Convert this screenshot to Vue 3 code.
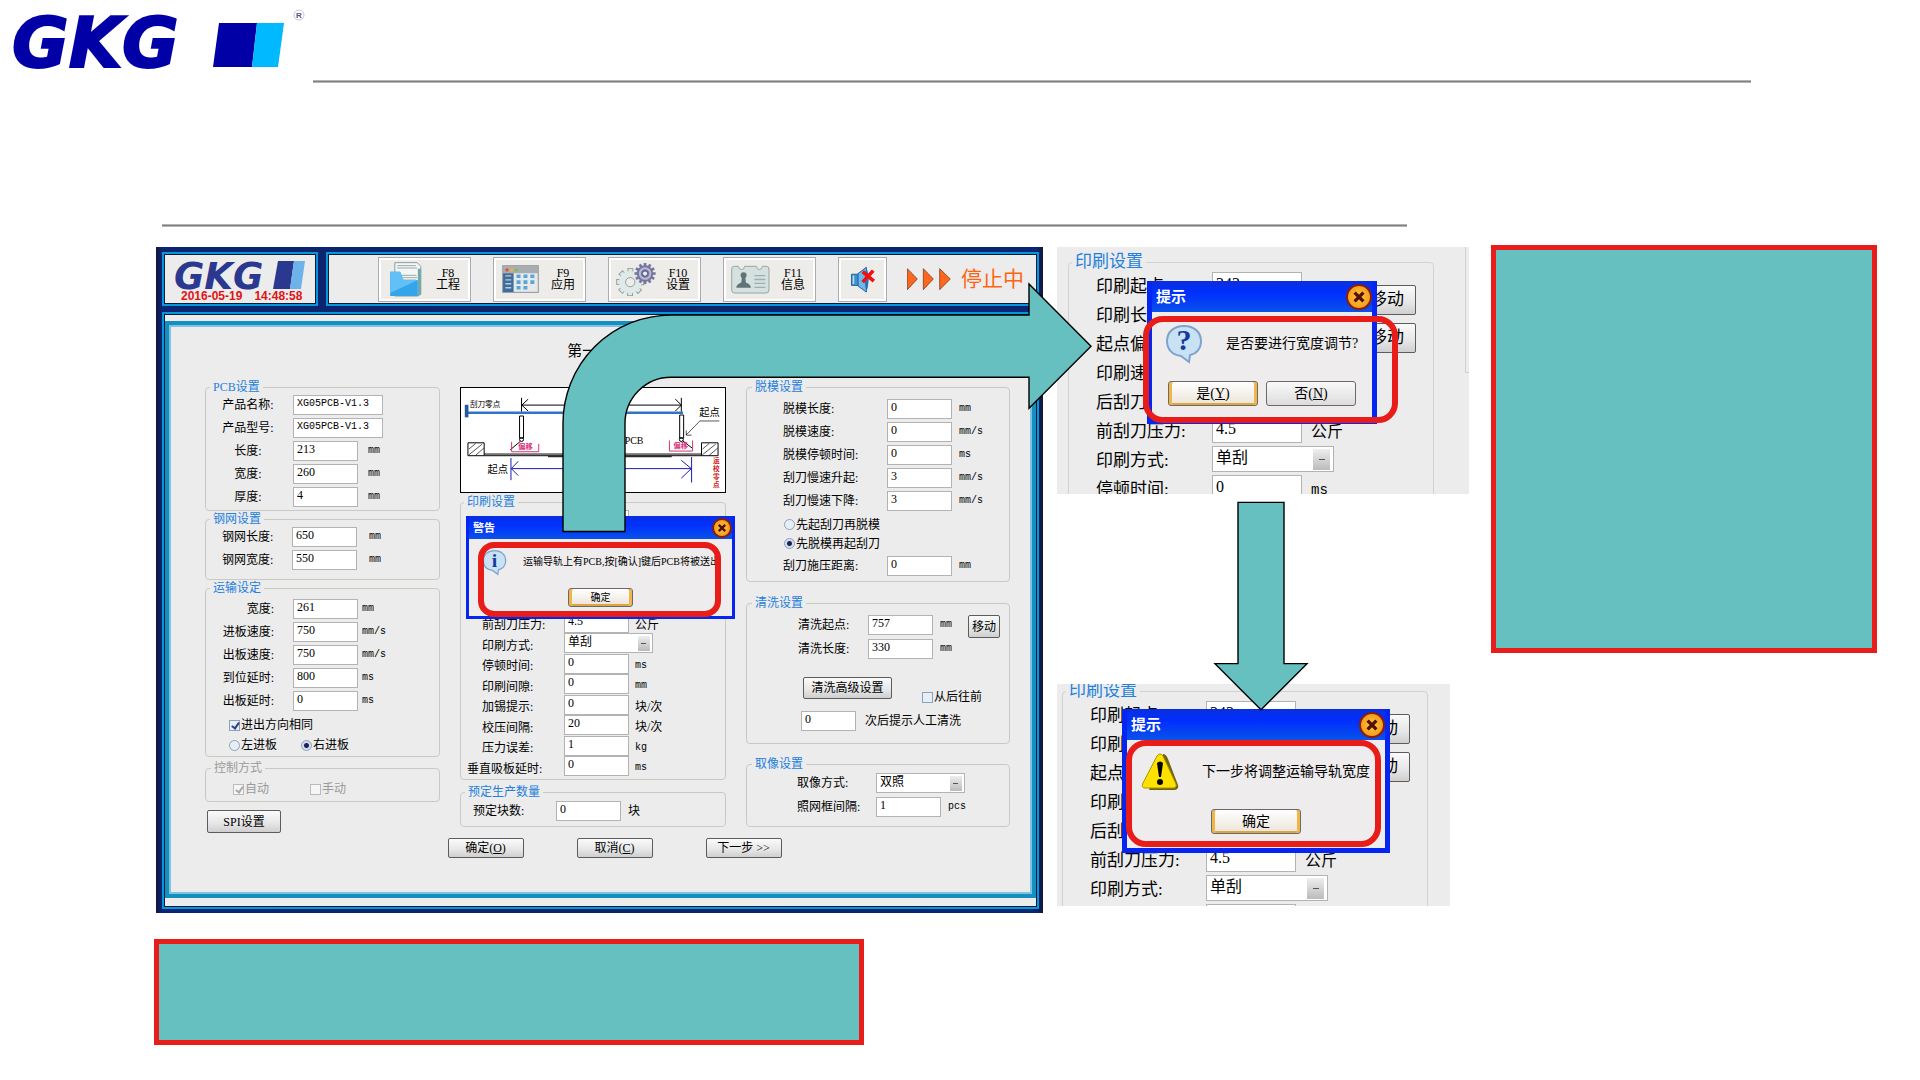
<script setup>
const pcb = [
  { id: 'pcb-name', label: '产品名称:', value: 'XG05PCB-V1.3', wide: true },
  { id: 'pcb-model', label: '产品型号:', value: 'XG05PCB-V1.3', wide: true },
  { id: 'pcb-length', label: '长度:', value: '213', unit: 'mm' },
  { id: 'pcb-width', label: '宽度:', value: '260', unit: 'mm' },
  { id: 'pcb-thick', label: '厚度:', value: '4', unit: 'mm' }
]
const stencil = [
  { id: 'st-length', label: '钢网长度:', value: '650', unit: 'mm' },
  { id: 'st-width', label: '钢网宽度:', value: '550', unit: 'mm' }
]
const transport = [
  { id: 'tr-width', label: '宽度:', value: '261', unit: 'mm' },
  { id: 'tr-in', label: '进板速度:', value: '750', unit: 'mm/s' },
  { id: 'tr-out', label: '出板速度:', value: '750', unit: 'mm/s' },
  { id: 'tr-arrive', label: '到位延时:', value: '800', unit: 'ms' },
  { id: 'tr-delay', label: '出板延时:', value: '0', unit: 'ms' }
]
const printing = [
  { id: 'start', label: '印刷起点:', value: '343', unit: 'mm' },
  { id: 'length', label: '印刷长度:', value: '260', unit: 'mm' },
  { id: 'offset', label: '起点偏移:', value: '0', unit: 'mm' },
  { id: 'speed', label: '印刷速度:', value: '50', unit: 'mm/s' },
  { id: 'rear', label: '后刮刀压力:', value: '4.5', unit: '公斤', cjk: true },
  { id: 'front', label: '前刮刀压力:', value: '4.5', unit: '公斤', cjk: true },
  { id: 'mode', label: '印刷方式:', value: '单刮', select: true },
  { id: 'pause', label: '停顿时间:', value: '0', unit: 'ms' },
  { id: 'gap', label: '印刷间隙:', value: '0', unit: 'mm' },
  { id: 'solder', label: '加锡提示:', value: '0', unit: '块/次', cjk: true },
  { id: 'check', label: '校压间隔:', value: '20', unit: '块/次', cjk: true },
  { id: 'error', label: '压力误差:', value: '1', unit: 'kg' },
  { id: 'suction', label: '垂直吸板延时:', value: '0', unit: 'ms', long: true }
]
const release = [
  { id: 're-length', label: '脱模长度:', value: '0', unit: 'mm' },
  { id: 're-speed', label: '脱模速度:', value: '0', unit: 'mm/s' },
  { id: 're-pause', label: '脱模停顿时间:', value: '0', unit: 'ms' },
  { id: 're-up', label: '刮刀慢速升起:', value: '3', unit: 'mm/s' },
  { id: 're-down', label: '刮刀慢速下降:', value: '3', unit: 'mm/s' }
]
const clean = [
  { id: 'cl-start', label: '清洗起点:', value: '757', unit: 'mm' },
  { id: 'cl-length', label: '清洗长度:', value: '330', unit: 'mm' }
]
const details = ['ask', 'notice']
const detailRows = printing.slice(0, 8)
const teeth = Array.from({ length: 12 }, (_, i) => i * 30)
const bigTeeth = Array.from({ length: 8 }, (_, i) => i * 45)
</script>

<template>
  <div class="slide">
    <header class="masthead">
      <svg class="brand" viewBox="0 0 313 92" role="img" aria-label="GKG">
        <text x="12" y="67" class="brand-text">GKG</text>
        <path d="M219 23H257L252 67H213Z" fill="#0000a6" />
        <path d="M257 23H284L278 67H252Z" fill="#00b9ff" />
        <circle cx="299" cy="15" r="5" fill="none" stroke="#c4c4dc" />
        <text x="296" y="18" class="reg">R</text>
      </svg>
      <hr class="rule" />
    </header>
    <hr class="rule second" />

    <main class="stage">
      <section class="app">
        <div class="topbar">
          <div class="box logo-box">
            <svg class="app-logo" viewBox="174 259 134 31" role="img" aria-label="GKG">
              <text x="174" y="289" class="app-logo-text">GKG</text>
              <path d="M278 261H294L290 289H273Z" fill="#2b3890" />
              <path d="M294 261H305L301 289H290Z" fill="#6db3ea" />
            </svg>
            <div class="clock"><span>2016-05-19</span><span>14:48:58</span></div>
          </div>
          <nav class="box tools">
            <button class="tool">
              <span class="ico"><svg width="33" height="35" viewBox="720 65 98 105">
                <path d="M737 67H804L815 78V162L806 167H737Z" fill="#f5f7f7" stroke="#8a9ba0" stroke-width="3" />
                <path d="M744 76H800M744 83H804M744 105H802M760 112H804M760 119H800" stroke="#97a9a9" stroke-width="3" />
                <path d="M806 85H815V161L806 167Z" fill="#6ea9a9" />
                <path d="M723 94H753L763 119H806V167H723Z" fill="#35a5ea" />
                <path d="M723 94H753L763 119H806L723 158Z" fill="#62c0f7" />
              </svg></span>
              <span class="cap">F8<br />工程</span>
            </button>
            <button class="tool">
              <span class="ico"><svg width="37" height="28" viewBox="1060 77 112 85">
                <rect x="1062" y="79" width="108" height="81" fill="#e6e9e8" stroke="#8b9498" stroke-width="3" />
                <rect x="1062" y="79" width="108" height="23" fill="#a9adb0" />
                <circle cx="1075" cy="92" r="5" fill="#e94a3c" /><circle cx="1089" cy="92" r="5" fill="#edb23c" /><circle cx="1103" cy="92" r="5" fill="#79c050" />
                <rect x="1063" y="102" width="32" height="57" fill="#3f6c9a" />
                <path d="M1070 110H1088M1070 122H1088M1070 134H1088M1070 146H1088" stroke="#b9cce0" stroke-width="4" />
                <path d="M1104 111H1116M1125 111H1137M1146 111H1158M1104 129H1116M1125 129H1137M1146 129H1158M1104 146H1116M1125 146H1137" stroke="#58a5dc" stroke-width="11" />
              </svg></span>
              <span class="cap">F9<br />应用</span>
            </button>
            <button class="tool">
              <span class="ico"><svg width="41" height="34" viewBox="78 65 122 103">
                <g fill="#dfe9e8" stroke="#8fa3a3" stroke-width="3">
                  <rect v-for="a in bigTeeth" :key="a" x="116" y="85" width="15" height="18" :transform="`rotate(${a} 123 126)`" />
                  <circle cx="123" cy="126" r="31" />
                  <circle cx="123" cy="126" r="14" fill="#efecea" />
                </g>
                <circle cx="123" cy="126" r="27" fill="none" stroke="#dfe9e8" stroke-width="14" />
                <g fill="#77779e">
                  <rect v-for="a in teeth" :key="a" x="164" y="68" width="8" height="12" :transform="`rotate(${a} 168 100)`" />
                  <circle cx="168" cy="100" r="25" />
                </g>
                <circle cx="168" cy="100" r="16" fill="none" stroke="#b9b9da" stroke-width="6" />
                <circle cx="168" cy="100" r="8" fill="#ecebf2" stroke="#50507c" stroke-width="3" />
              </svg></span>
              <span class="cap">F10<br />设置</span>
            </button>
            <button class="tool">
              <span class="ico"><svg width="39" height="29" viewBox="428 72 118 88">
                <path d="M438 76H450Q452 86 460 86Q468 86 469 76H505Q507 86 514 86Q521 86 523 76H535Q543 76 543 84V148Q543 157 534 157H439Q430 157 430 148V84Q430 76 438 76Z" fill="#d5e1df" stroke="#93a6a4" stroke-width="3" />
                <circle cx="466" cy="103" r="9" fill="#5f7476" />
                <path d="M461 108H471L473 125Q488 130 488 141H444Q444 130 459 125Z" fill="#5f7476" />
                <path d="M499 104H532M499 116H532M499 128H532M499 140H532" stroke="#9dafae" stroke-width="4" />
              </svg></span>
              <span class="cap">F11<br />信息</span>
            </button>
            <button class="tool mute" aria-label="静音">
              <svg width="26" height="27" viewBox="780 78 78 82">
                <path d="M784 103H807V137H784Z" fill="#3c8fd0" stroke="#2a628f" stroke-width="3" />
                <path d="M804 101L829 82Q837 120 829 157L804 139Z" fill="#6ab8ec" stroke="#235f9c" stroke-width="3" />
                <path d="M829 82Q843 120 829 157Q820 120 829 82Z" fill="#2b6fb4" />
                <path d="M790 107V133" stroke="#b5dcf5" stroke-width="5" />
                <path d="M818 95L852 124M850 92L818 127" stroke="#f01010" stroke-width="11" />
              </svg>
            </button>
            <svg class="chevrons" width="44" height="22" viewBox="950 84 132 66">
              <path d="M951 86L981 117L951 149Z M999 86L1029 117L999 149Z M1048 86L1080 117L1048 149Z" fill="#ff681c" stroke="#5c2a10" stroke-width="2" />
            </svg>
            <strong class="status">停止中</strong>
          </nav>
        </div>

        <div class="box work">
          <form class="frame" @submit.prevent>
            <h1 class="step">第一步</h1>
            <div class="columns">
              <div class="col">
                <fieldset class="g-pcb">
                  <legend>PCB设置</legend>
                  <div v-for="f in pcb" :key="f.id" class="field">
                    <label :for="f.id">{{ f.label }}</label>
                    <input :id="f.id" type="text" :value="f.value" :class="{ wide: f.wide }" />
                    <span class="unit">{{ f.unit }}</span>
                  </div>
                </fieldset>
                <fieldset class="g-stencil">
                  <legend>钢网设置</legend>
                  <div v-for="f in stencil" :key="f.id" class="field">
                    <label :for="f.id">{{ f.label }}</label>
                    <input :id="f.id" type="text" :value="f.value" />
                    <span class="unit">{{ f.unit }}</span>
                  </div>
                </fieldset>
                <fieldset class="g-transport">
                  <legend>运输设定</legend>
                  <div v-for="f in transport" :key="f.id" class="field">
                    <label :for="f.id">{{ f.label }}</label>
                    <input :id="f.id" type="text" :value="f.value" />
                    <span class="unit">{{ f.unit }}</span>
                  </div>
                  <div class="opts first"><label><input type="checkbox" checked />进出方向相同</label></div>
                  <div class="opts">
                    <label><input type="radio" name="dir" />左进板</label>
                    <label><input type="radio" name="dir" checked />右进板</label>
                  </div>
                </fieldset>
                <fieldset class="g-control" disabled>
                  <legend>控制方式</legend>
                  <div class="opts">
                    <label><input type="checkbox" checked />自动</label>
                    <label><input type="checkbox" />手动</label>
                  </div>
                </fieldset>
                <button class="btn spi">SPI设置</button>
              </div>

              <div class="col middle">
                <svg class="diagram" viewBox="28 172 798 313">
                  <g fill="none" stroke="#000" stroke-width="3">
                    <path d="M211 201V243M694 201V243M211 223H694M231 205L212 223L231 241M676 205L694 223L676 241" />
                    <path d="M205 256H217V323H205ZM689 253H701V323H689Z" />
                    <circle cx="211" cy="327" r="6" /><circle cx="694" cy="327" r="6" />
                    <path d="M207 333L177 358M698 331L728 354" />
                    <path d="M49 337H98V376H49ZM755 337H805V376H755Z" />
                    <path d="M52 356L72 339M52 373L92 341M72 375L97 353M758 356L778 339M758 373L798 341M778 375L804 353" stroke-width="2" />
                    <path d="M98 371H755M98 376H755M291 379H665" />
                    <path d="M809 271H750L709 313M709 300V314H725" stroke-width="2" />
                  </g>
                  <path d="M46 246H699" stroke="#2f74c8" stroke-width="8" />
                  <path d="M45 222V260" stroke="#27589a" stroke-width="11" />
                  <g fill="none" stroke="#1a1ab4" stroke-width="3">
                    <path d="M179 383V450M725 380V457M180 415H724M201 393L180 415L201 436M694 390L724 415L694 444" />
                  </g>
                  <path d="M181 334V364H263V340M658 330V362H728V330" fill="none" stroke="#d8307c" stroke-width="3" />
                  <g class="dg">
                    <text x="55" y="229" font-size="23">刮刀零点</text>
                    <text x="748" y="257" font-size="31">起点</text>
                    <text x="108" y="429" font-size="31">起点</text>
                    <text x="523" y="340" font-size="30" class="latin">PCB</text>
                    <g fill="#d8307c" font-size="22" font-weight="700"><text x="201" y="357">偏移</text><text x="670" y="353">偏移</text></g>
                    <g fill="#d01818" font-size="20" font-weight="700"><text x="790" y="398">运</text><text x="790" y="422">校</text><text x="790" y="446">零</text><text x="790" y="470">点</text></g>
                  </g>
                </svg>
                <fieldset class="g-print">
                  <legend>印刷设置</legend>
                  <div class="stack">
                    <div v-for="f in printing" :key="f.id" class="field" :class="{ long: f.long }">
                      <label :for="'pr-' + f.id">{{ f.label }}</label>
                      <select v-if="f.select" :id="'pr-' + f.id"><option>{{ f.value }}</option></select>
                      <input v-else :id="'pr-' + f.id" type="text" :value="f.value" />
                      <span class="unit" :class="{ cjk: f.cjk }">{{ f.unit }}</span>
                    </div>
                  </div>
                </fieldset>
                <fieldset class="g-count">
                  <legend>预定生产数量</legend>
                  <div class="field">
                    <label for="count">预定块数:</label>
                    <input id="count" type="text" value="0" />
                    <span class="unit cjk">块</span>
                  </div>
                </fieldset>
              </div>

              <div class="col">
                <fieldset class="g-release">
                  <legend>脱模设置</legend>
                  <div v-for="f in release" :key="f.id" class="field">
                    <label :for="f.id">{{ f.label }}</label>
                    <input :id="f.id" type="text" :value="f.value" />
                    <span class="unit">{{ f.unit }}</span>
                  </div>
                  <div class="opts first"><label><input type="radio" name="rel" />先起刮刀再脱模</label></div>
                  <div class="opts"><label><input type="radio" name="rel" checked />先脱模再起刮刀</label></div>
                  <div class="field">
                    <label for="re-dist">刮刀施压距离:</label>
                    <input id="re-dist" type="text" value="0" />
                    <span class="unit">mm</span>
                  </div>
                </fieldset>
                <fieldset class="g-clean">
                  <legend>清洗设置</legend>
                  <div class="split">
                    <div>
                      <div v-for="f in clean" :key="f.id" class="field">
                        <label :for="f.id">{{ f.label }}</label>
                        <input :id="f.id" type="text" :value="f.value" />
                        <span class="unit">{{ f.unit }}</span>
                      </div>
                    </div>
                    <button class="btn move">移动</button>
                  </div>
                  <div class="advanced">
                    <button class="btn">清洗高级设置</button>
                    <label class="tick"><input type="checkbox" />从后往前</label>
                  </div>
                  <div class="manual">
                    <input id="manual" type="text" value="0" />
                    <label for="manual">次后提示人工清洗</label>
                  </div>
                </fieldset>
                <fieldset class="g-image">
                  <legend>取像设置</legend>
                  <div class="field">
                    <label for="im-mode">取像方式:</label>
                    <select id="im-mode"><option>双照</option></select>
                  </div>
                  <div class="field">
                    <label for="im-gap">照网框间隔:</label>
                    <input id="im-gap" type="text" value="1" />
                    <span class="unit">pcs</span>
                  </div>
                </fieldset>
              </div>
            </div>
            <div class="footer">
              <button class="btn">确定(<u>O</u>)</button>
              <button class="btn">取消(<u>C</u>)</button>
              <button class="btn">下一步 &gt;&gt;</button>
            </div>
          </form>
        </div>

        <div class="dialog warn" role="dialog" aria-label="警告">
          <div class="title"><span>警告</span>
            <button class="close" aria-label="关闭"><svg viewBox="0 0 20 20"><path d="M6 6L14 14M14 6L6 14" /></svg></button>
          </div>
          <div class="message">
            <svg class="bubble" viewBox="0 0 38 40"><path d="M19 2C29 2 36 8 36 17C36 25 31 30 25 31L24 38L16 32C7 31 2 25 2 17C2 8 9 2 19 2Z" /><text x="19" y="27" text-anchor="middle">i</text></svg>
            <p>运输导轨上有PCB,按[确认]键后PCB将被送出</p>
          </div>
          <div class="actions"><button class="default">确定</button></div>
          <i class="mark"></i>
        </div>
      </section>

      <div class="details">
        <section v-for="d in details" :key="d" class="panel" :class="d">
          <fieldset>
            <legend>印刷设置</legend>
            <div class="split">
              <div>
                <div v-for="f in detailRows" :key="f.id" class="field">
                  <label :for="d + '-' + f.id">{{ f.label }}</label>
                  <select v-if="f.select" :id="d + '-' + f.id"><option>{{ f.value }}</option></select>
                  <input v-else :id="d + '-' + f.id" type="text" :value="f.value" />
                  <span class="unit" :class="{ cjk: f.cjk }">{{ f.unit }}</span>
                </div>
              </div>
              <div class="moves"><button class="btn">移动</button><button class="btn">移动</button></div>
            </div>
          </fieldset>
          <div class="dialog" role="dialog" aria-label="提示">
            <div class="title"><span>提示</span>
              <button class="close" aria-label="关闭"><svg viewBox="0 0 20 20"><path d="M6 6L14 14M14 6L6 14" /></svg></button>
            </div>
            <div class="message">
              <svg v-if="d === 'ask'" class="bubble" viewBox="0 0 38 40"><path d="M19 2C29 2 36 8 36 17C36 25 31 30 25 31L24 38L16 32C7 31 2 25 2 17C2 8 9 2 19 2Z" /><text x="19" y="26" text-anchor="middle">?</text></svg>
              <svg v-else class="alert" viewBox="0 0 38 40"><path d="M22 2Q25 2 27 7L37 33Q38 38 33 38H8L20 8Z" fill="#6d6413" /><path d="M16 4Q19 0 22 4L35 32Q36 36 32 36H4Q0 36 2 31Z" fill="#ffe100" stroke="#a89300" /><path d="M16 11Q19 8 22 11L20 25H18Z" fill="#000" /><circle cx="19" cy="30" r="3" /></svg>
              <p>{{ d === 'ask' ? '是否要进行宽度调节?' : '下一步将调整运输导轨宽度' }}</p>
            </div>
            <div v-if="d === 'ask'" class="actions"><button class="default">是(<u>Y</u>)</button><button>否(<u>N</u>)</button></div>
            <div v-else class="actions"><button class="default">确定</button></div>
            <i class="mark"></i>
          </div>
        </section>
      </div>

      <aside class="note side"></aside>

      <svg class="arrows" viewBox="156 247 1723 665" preserveAspectRatio="none">
        <path d="M563 531V423A108 108 0 0 1 671 315H1029V284L1091 346L1029 408V377H671A46 46 0 0 0 625 423V531Z" />
        <path d="M1238 502H1284V663H1307L1261 709L1215 663H1238Z" />
      </svg>
    </main>

    <aside class="note below"></aside>
  </div>
</template>

<style>
body {
  margin: 0;
  background: #fff;
}
</style>

<style scoped>
* {
  box-sizing: border-box;
}
.slide {
  min-height: 100vh;
  overflow: hidden;
  color: #000;
  font: 12px/16px "Liberation Serif", "Noto Sans CJK SC", serif;
}
button,
input,
select {
  font: inherit;
  color: inherit;
  margin: 0;
}
.masthead {
  display: flex;
  align-items: flex-start;
  margin-right: 169px;
}
.brand {
  flex: none;
  width: 313px;
  height: 92px;
}
.brand-text {
  font: italic bold 69px "DejaVu Sans", sans-serif;
  fill: #0000a6;
  stroke: #0000a6;
  stroke-width: 2px;
}
.reg {
  font: bold 8px "Liberation Sans", sans-serif;
  fill: #55557c;
}
.rule {
  flex: 1;
  height: 3px;
  margin: 80px 0 0;
  border: 0;
  background: linear-gradient(#b4b4b4 1px, #808080 1px 2px, #b4b4b4 2px);
}
.rule.second {
  margin: 132px 513px 0 162px;
}
.stage {
  position: relative;
  display: grid;
  grid-template-columns: 887fr 412fr 396fr;
  column-gap: 14px;
  margin: 20px 41px 0 156px;
}

/* machine software window */
.app {
  position: relative;
  padding: 5px 4px 4px 6px;
  background: linear-gradient(90deg, #15153a, #0a2672 6px, #0c2468 50%, #0a2672 calc(100% - 6px), #15153a);
}
.box {
  background: #ececec;
  border: 2px solid #0795dc;
  box-shadow: inset 0 0 0 1px #061c34;
}
.topbar {
  display: flex;
  gap: 8px;
  margin-bottom: 6px;
}
.logo-box {
  flex: none;
  width: 156px;
  height: 54px;
  padding: 5px 0 0 10px;
}
.app-logo {
  display: block;
  width: 134px;
  height: 31px;
}
.app-logo-text {
  font: italic bold 37px "DejaVu Sans", sans-serif;
  fill: #2b3890;
}
.clock {
  display: flex;
  gap: 12px;
  padding-left: 7px;
  font: bold 12px/12px "Liberation Sans", sans-serif;
  color: #e01414;
}
.tools {
  flex: 1;
  display: flex;
  align-items: center;
  gap: 22px;
  padding-left: 50px;
}
.tool {
  flex: none;
  display: grid;
  grid-template-columns: 50px 28px;
  align-items: center;
  gap: 4px;
  width: 93px;
  height: 45px;
  padding: 0 0 0 1px;
  background: #eeece9;
  border: 1px solid #a9abae;
  box-shadow: inset 0 0 0 2px #fff;
}
.ico {
  display: flex;
  justify-content: center;
}
.tool svg {
  display: block;
}
.cap {
  line-height: 12px;
}
.tool.mute {
  grid-template-columns: 1fr;
  justify-items: center;
  width: 49px;
}
.chevrons {
  flex: none;
  margin-left: -2px;
}
.status {
  margin-left: -12px;
  font-size: 21px;
  font-weight: 400;
  line-height: 24px;
  white-space: nowrap;
  color: #ff6412;
}
.work {
  padding: 7px 1px 9px;
}
.frame {
  border: 4px solid #158fc0;
  outline: 2px solid #7fc3e2;
  outline-offset: -6px;
  padding: 16px 22px 36px 36px;
}
.step {
  margin: 0 0 18px 45%;
  font-size: 15px;
  font-weight: 400;
  line-height: 20px;
}
.columns {
  display: grid;
  grid-template-columns: 235fr 266fr 264fr;
  column-gap: 20px;
}
fieldset {
  min-width: 0;
  margin: 0;
  padding: 0;
  border: 1px solid #c9cbc2;
  border-radius: 4px;
}
legend {
  height: 16px;
  margin-left: 5px;
  padding: 0 3px;
  color: #2480dc;
}
.field {
  display: flex;
  height: 20px;
  align-items: center;
}
.field + .field {
  margin-top: 3px;
}
.field label {
  flex: none;
  white-space: nowrap;
}
input[type='text'],
select {
  flex: none;
  width: 65px;
  height: 20px;
  padding: 0 3px 3px;
  background: #fff;
  border: 1px solid #b3b3b3;
  border-radius: 0;
  outline: 0;
}
input.wide {
  width: 90px;
  font-family: "Liberation Mono", monospace;
  font-size: 10px;
}
select {
  appearance: none;
  width: 89px;
  background:
    linear-gradient(#555, #555) right 6px center / 5px 1px no-repeat,
    linear-gradient(#eee, #bbb) right 2px center / 12px 15px no-repeat,
    #fff;
}
.unit {
  margin-left: 12px;
  font: 10px/16px "Liberation Mono", monospace;
  white-space: nowrap;
}
.unit.cjk {
  font: 12px/16px "Liberation Serif", "Noto Sans CJK SC", serif;
}
.opts {
  display: flex;
  height: 20px;
}
.opts.first {
  margin-top: 4px;
}
.opts label,
.tick {
  display: flex;
  align-items: center;
  gap: 1px;
  white-space: nowrap;
}
input[type='checkbox'],
input[type='radio'] {
  appearance: none;
  flex: none;
  position: relative;
  width: 11px;
  height: 11px;
  background: #e8eef5;
  border: 1px solid #8ba2bd;
}
input[type='radio'] {
  width: 11px;
  border-radius: 50%;
}
input[type='radio']:checked {
  background: radial-gradient(#20205c 2px, #d6dcee 3px);
}
input[type='checkbox']:checked::after {
  content: '';
  position: absolute;
  left: 3px;
  top: 0;
  width: 3px;
  height: 6px;
  border: solid #30408c;
  border-width: 0 2px 2px 0;
  transform: rotate(35deg);
}
.btn {
  height: 20px;
  padding: 0;
  background: linear-gradient(#fafafa, #e6e6e6 60%, #cfcfcf);
  border: 1px solid #5c5c5c;
  border-radius: 2px;
  line-height: 16px;
  white-space: nowrap;
}

.g-pcb {
  padding: 0 0 3px 16px;
}
.g-pcb legend,
.g-stencil legend {
  margin-left: -12px;
}
.g-pcb label {
  width: 52px;
  margin-right: 19px;
  text-align: center;
}
.g-pcb .unit {
  margin-left: 10px;
}
.g-stencil {
  padding: 0 0 9px 16px;
}
.g-stencil label {
  width: 70px;
}
.g-transport {
  padding: 3px 0 1px 14px;
}
.g-transport legend {
  margin-left: -10px;
}
.g-transport .field label {
  width: 54px;
  margin-right: 19px;
  text-align: right;
}
.g-transport .unit {
  margin-left: 4px;
}
.g-transport .opts {
  gap: 24px;
  padding-left: 9px;
}
.g-control {
  margin-top: 3px;
  padding: 3px 0 2px 27px;
  color: #9a9a9a;
}
.g-control legend {
  margin-left: -22px;
  color: #9a9a9a;
}
.g-control .opts {
  gap: 41px;
}
.g-control input[type='checkbox'] {
  background: #f6f6f6;
  border-color: #bbb;
}
.g-control input[type='checkbox']::after {
  border-color: #aaa;
}
.spi {
  width: 74px;
  height: 23px;
  margin: 8px 0 0 2px;
}

.middle {
  padding-top: 8px;
}
.diagram {
  display: block;
  width: 100%;
  height: 106px;
  background: #fff;
  border: 1px solid #000;
}
.dg {
  font-family: "Noto Sans CJK SC", sans-serif;
}
.latin {
  font-family: "Liberation Serif", serif;
}
.g-print {
  margin-top: 1px;
  padding: 0 0 3px 21px;
}
.g-print legend {
  margin-left: -18px;
}
.stack {
  display: flex;
  flex-direction: column;
  justify-content: space-between;
  height: 266px;
}
.stack .field {
  margin: 0;
}
.g-print label {
  width: 82px;
  padding-top: 5px;
}
.g-print .long label {
  width: 97px;
  margin-left: -15px;
}
.g-print .unit {
  margin-left: 6px;
  padding-top: 4px;
}
.g-count {
  margin-top: 4px;
  padding: 1px 0 5px 12px;
}
.g-count legend {
  margin-left: -8px;
}
.g-count label {
  width: 83px;
}
.g-count .unit {
  margin-left: 7px;
}

.g-release {
  padding: 4px 0 5px 36px;
}
.g-release legend {
  margin-left: -31px;
}
.g-release .field label {
  width: 104px;
}
.g-release .unit,
.g-clean .unit,
.g-image .unit {
  margin-left: 7px;
}
.g-release .opts {
  height: 19px;
  padding-left: 1px;
}
.g-release .opts + .field {
  margin-top: 3px;
}
.g-clean {
  margin-top: 13px;
  padding: 4px 9px 12px 51px;
}
.g-clean legend {
  margin-left: -46px;
}
.split {
  display: flex;
  justify-content: space-between;
  align-items: flex-start;
}
.g-clean .field label {
  width: 70px;
}
.g-clean .field + .field {
  margin-top: 4px;
}
.move {
  width: 32px;
  height: 23px;
}
.advanced {
  display: flex;
  gap: 30px;
  margin: 18px 0 0 5px;
}
.advanced .btn {
  width: 89px;
  height: 22px;
}
.tick {
  padding-top: 18px;
  height: 22px;
}
.manual {
  display: flex;
  align-items: center;
  gap: 9px;
  margin: 12px 0 0 3px;
}
.manual input[type='text'] {
  width: 55px;
}
.g-image {
  margin-top: 12px;
  padding: 1px 0 9px 50px;
}
.g-image legend {
  margin-left: -45px;
}
.g-image label {
  width: 79px;
}
.g-image .field + .field {
  margin-top: 4px;
}
.footer {
  display: flex;
  justify-content: center;
  gap: 53px;
  margin: 5px 0 0 14px;
}
.footer .btn {
  width: 76px;
}

/* dialogs */
.dialog {
  position: absolute;
  border: 5px solid #0526f0;
  border-top: 0;
  background: #eeecec;
}
.title {
  display: flex;
  align-items: center;
  justify-content: space-between;
  height: 31px;
  padding-left: 4px;
  background: linear-gradient(#0a2ee0, #0030ff 40%, #0a52e8);
  color: #fff;
  font-size: 15px;
  font-weight: 700;
}
.close {
  width: 26px;
  height: 26px;
  padding: 0;
  border: 2px solid #8c1c08;
  border-radius: 50%;
  background: radial-gradient(#ffc63c, #ee8e12);
}
.close svg {
  display: block;
  width: 100%;
}
.close path {
  stroke: #501004;
  stroke-width: 3;
}
.message {
  display: flex;
  align-items: center;
}
.message p {
  margin: 0;
  font-size: 14px;
  white-space: nowrap;
}
.message svg {
  flex: none;
  width: 38px;
  height: 40px;
}
.bubble path {
  fill: #c9e1f5;
  stroke: #7ea4cc;
  stroke-width: 2;
}
.bubble text {
  font: bold 30px "Liberation Serif", serif;
  fill: #123c9c;
}
.actions {
  display: flex;
  justify-content: center;
  gap: 8px;
}
.actions button {
  width: 90px;
  height: 25px;
  padding: 0;
  border: 1px solid #6a6a6a;
  border-radius: 3px;
  background: linear-gradient(#fafafa, #dcdcdc);
  font-size: 14px;
}
.actions .default {
  background: linear-gradient(#fff, #eae4d8);
  box-shadow: inset 3px 0 #f0b64a, inset -3px 0 #f0b64a, inset 0 -2px #e0a440;
}
.mark {
  position: absolute;
  border: 6px solid #e81c18;
  border-radius: 20px;
}
.warn {
  left: 310px;
  top: 269px;
  width: 269px;
  height: 103px;
  border-width: 0 3px 3px;
}
.warn .title {
  height: 23px;
  font-size: 11px;
}
.warn .close {
  width: 20px;
  height: 20px;
}
.warn .message {
  height: 26px;
  margin: 10px 0 0 13px;
  gap: 16px;
}
.warn .message svg {
  width: 25px;
  height: 27px;
}
.warn .message p {
  font-size: 10px;
}
.warn .actions {
  margin-top: 13px;
}
.warn .actions button {
  width: 65px;
  height: 19px;
  font-size: 10px;
  line-height: 14px;
}
.warn .mark {
  left: 9px;
  top: 26px;
  width: 243px;
  height: 75px;
  border-radius: 16px;
}

/* enlarged details */
.details {
  display: flex;
  flex-direction: column;
  justify-content: space-between;
  padding-bottom: 7px;
}
.panel {
  position: relative;
  height: 247px;
  padding: 5px 35px 0 11px;
  overflow: hidden;
  background: #ececec;
  font-size: 17px;
  line-height: 20px;
}
.panel.ask::after {
  content: '';
  position: absolute;
  right: 0;
  top: 0;
  width: 3px;
  height: 125px;
  border: solid #d2d2cc;
  border-width: 0 0 1px 1px;
}
.panel.notice {
  height: 222px;
  margin-right: 19px;
  padding: 0 22px 0 5px;
}
.panel.notice fieldset {
  margin-top: -3px;
}
.panel legend {
  height: 20px;
  margin-left: -24px;
}
.panel fieldset {
  padding: 0 17px 20px 27px;
  border-color: #d2d2cc;
}
.panel .field {
  height: 26px;
}
.panel .field label {
  width: 116px;
  padding-top: 4px;
}
.panel input[type='text'],
.panel select {
  width: 90px;
  height: 26px;
  font-size: 16px;
}
.panel select {
  width: 122px;
  background-size: 6px 1px, 17px 21px, auto;
  background-position: right 8px center, right 3px center, 0 0;
}
.panel .unit {
  margin-left: 9px;
  font-size: 14px;
  padding-top: 4px;
}
.panel .unit.cjk {
  font-size: 16px;
}
.moves {
  display: grid;
  gap: 8px;
  margin: 13px 0 0 -20px;
}
.panel .btn {
  width: 58px;
  height: 30px;
}
.ask .dialog {
  left: 90px;
  top: 34px;
  width: 230px;
  height: 143px;
}
.ask .message {
  margin: 12px 0 0 13px;
  gap: 23px;
}
.ask .actions {
  margin-top: 17px;
}
.ask .mark {
  left: -9px;
  top: 35px;
  width: 255px;
  height: 107px;
}
.notice .dialog {
  left: 65px;
  top: 25px;
  width: 268px;
  height: 144px;
}
.notice .message {
  margin: 12px 0 0 14px;
  gap: 23px;
}
.notice .actions {
  margin-top: 17px;
}
.notice .mark {
  left: -1px;
  top: 31px;
  width: 255px;
  height: 107px;
}

.arrows {
  position: absolute;
  inset: 0;
  width: 100%;
  height: 100%;
  pointer-events: none;
}
.arrows path {
  fill: #66c0c0;
  stroke: #000;
  stroke-width: 1.4;
}
.note {
  background: #66c0c0;
  border: 5px solid #e81c18;
}
.side {
  height: 408px;
  margin: -2px 2px 0 8px;
}
.below {
  width: 37%;
  height: 106px;
  margin: 26px 0 0 154px;
}
</style>
